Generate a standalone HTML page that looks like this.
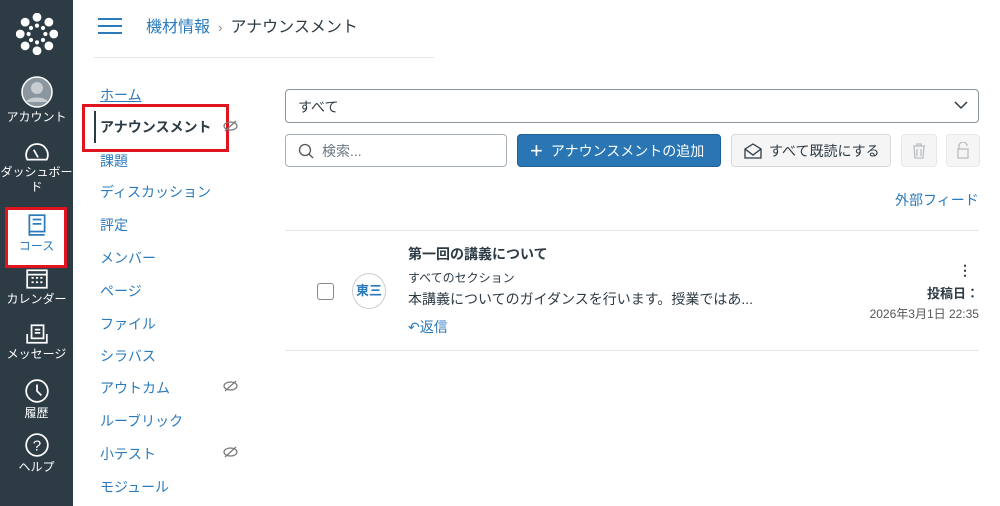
<!DOCTYPE html>
<html><head><meta charset="utf-8"><style>
*{box-sizing:border-box;margin:0;padding:0}
body{width:1000px;height:506px;overflow:hidden;background:#fff;font-family:"Liberation Sans","Noto Sans CJK JP",sans-serif;color:#2d3b45;position:relative}
.gn{position:absolute;left:0;top:0;width:73px;height:506px;background:#2d3b45}
.gi{position:absolute;left:0;width:73px;text-align:center;color:#fff;font-size:12px;line-height:15px}
.gi svg{display:block;margin:0 auto 2px}
.a{position:absolute;font-size:14px;color:#2b7abc;left:100px}
.abs{position:absolute}
.btn{position:absolute;border-radius:4px;font-size:14px;display:flex;align-items:center}
</style></head><body>
<div class="gn"></div>
<svg class="abs" style="left:16px;top:13px" width="42" height="42" viewBox="0 0 40 40" fill="#fff">
<circle cx="20" cy="4" r="4.2"/><circle cx="20" cy="36" r="4.2"/><circle cx="4" cy="20" r="4.2"/><circle cx="36" cy="20" r="4.2"/>
<circle cx="8.7" cy="8.7" r="4.2"/><circle cx="31.3" cy="8.7" r="4.2"/><circle cx="8.7" cy="31.3" r="4.2"/><circle cx="31.3" cy="31.3" r="4.2"/>
<circle cx="20" cy="12" r="2"/><circle cx="20" cy="28" r="2"/><circle cx="12" cy="20" r="2"/><circle cx="28" cy="20" r="2"/>
<circle cx="14.3" cy="14.3" r="2"/><circle cx="25.7" cy="14.3" r="2"/><circle cx="14.3" cy="25.7" r="2"/><circle cx="25.7" cy="25.7" r="2"/></svg>
<div class="gi" style="top:76px"><svg width="32" height="32" viewBox="0 0 32 32"><circle cx="16" cy="16" r="15" fill="#8b969e" stroke="#fff" stroke-width="1.5"/><circle cx="16" cy="12" r="6" fill="#c7cdd1"/><path d="M5 26c3-6 19-6 22 0" fill="#c7cdd1"/></svg>アカウント</div>
<div class="gi" style="top:141px"><svg width="26" height="22" viewBox="0 0 24 20" fill="none" stroke="#fff" stroke-width="1.6"><path d="M3 17A10 10 0 1 1 21 17Z"/><path d="M9 8l4 7"/></svg>ダッシュボー<br>ド</div>
<div class="abs" style="left:5px;top:207px;width:62px;height:61px;background:#fff;border:3px solid #e0141e"></div>
<div class="gi" style="top:213px;color:#2b7abc"><svg width="22" height="24" viewBox="0 0 20 22" fill="none" stroke="#2b7abc" stroke-width="1.6"><rect x="3" y="2" width="14" height="15"/><path d="M3 17v3h14M6 6h8M6 10h8"/></svg>コース</div>
<div class="gi" style="top:268px"><svg width="24" height="22" viewBox="0 0 22 20" fill="none" stroke="#fff" stroke-width="1.6"><rect x="2" y="2" width="18" height="16"/><path d="M2 6h18M6 9h2M10 9h2M14 9h2M6 13h2M10 13h2M14 13h2"/></svg>カレンダー</div>
<div class="gi" style="top:323px"><svg width="24" height="22" viewBox="0 0 22 20" fill="none" stroke="#fff" stroke-width="1.6"><rect x="6" y="2" width="11" height="12"/><path d="M2 10v8h18v-8M9 6h5M9 9h5"/></svg>メッセージ</div>
<div class="gi" style="top:378px"><svg width="26" height="26" viewBox="0 0 24 24" fill="none" stroke="#fff" stroke-width="1.6"><circle cx="12" cy="12" r="10"/><path d="M12 6v6l4 4"/></svg>履歴</div>
<div class="gi" style="top:432px"><svg width="26" height="26" viewBox="0 0 24 24" fill="none" stroke="#fff" stroke-width="1.6"><circle cx="12" cy="12" r="10"/><text x="12" y="17" font-size="14" fill="#fff" stroke="none" text-anchor="middle" font-family="Liberation Sans">?</text></svg>ヘルプ</div>

<svg class="abs" style="left:98px;top:17px" width="24" height="18"><path d="M0 2h24M0 9h24M0 16h24" stroke="#2b7abc" stroke-width="2"/></svg>
<div class="abs" style="left:146px;top:13px;font-size:16px;color:#2b7abc">機材情報 <span style="color:#888;font-size:13px">&nbsp;›&nbsp;</span> <span style="color:#2d3b45">アナウンスメント</span></div>
<div class="abs" style="left:94px;top:57px;width:340px;height:1px;background:#e4e6e8"></div>

<div class="a" style="top:85px;text-decoration:underline">ホーム</div>
<div class="abs" style="left:82px;top:104px;width:147px;height:48px;border:3px solid #e0141e"></div>
<div class="abs" style="left:94px;top:111px;width:2px;height:32px;background:#2d3b45"></div>
<div class="a" style="top:117px;color:#2d3b45;font-weight:bold">アナウンスメント</div>
<div class="a" style="top:151px">課題</div>
<div class="a" style="top:182px">ディスカッション</div>
<div class="a" style="top:215px">評定</div>
<div class="a" style="top:248px">メンバー</div>
<div class="a" style="top:281px">ページ</div>
<div class="a" style="top:314px">ファイル</div>
<div class="a" style="top:346px">シラバス</div>
<div class="a" style="top:378px">アウトカム</div>
<div class="a" style="top:411px">ルーブリック</div>
<div class="a" style="top:444px">小テスト</div>
<div class="a" style="top:477px">モジュール</div>
<svg class="abs" style="left:223px;top:120px" width="15" height="12" viewBox="0 0 15 12" fill="none" stroke="#777" stroke-width="1.2"><ellipse cx="7.5" cy="6" rx="6.5" ry="4"/><path d="M2 11L13 1"/></svg>
<svg class="abs" style="left:223px;top:380px" width="15" height="12" viewBox="0 0 15 12" fill="none" stroke="#777" stroke-width="1.2"><ellipse cx="7.5" cy="6" rx="6.5" ry="4"/><path d="M2 11L13 1"/></svg>
<svg class="abs" style="left:223px;top:446px" width="15" height="12" viewBox="0 0 15 12" fill="none" stroke="#777" stroke-width="1.2"><ellipse cx="7.5" cy="6" rx="6.5" ry="4"/><path d="M2 11L13 1"/></svg>

<div class="abs" style="left:285px;top:89px;width:694px;height:34px;border:1px solid #8a959c;border-radius:4px;font-size:14px;padding:7px 12px">すべて</div>
<svg class="abs" style="left:954px;top:101px" width="14" height="9"><path d="M1 1l6 6 6-6" fill="none" stroke="#2d3b45" stroke-width="1.5"/></svg>
<div class="btn" style="left:285px;top:134px;width:222px;height:33px;border:1px solid #a5afb5;color:#6b7780;padding-left:12px"><svg width="16" height="16" style="margin-right:8px"><circle cx="7" cy="7" r="5.5" fill="none" stroke="#555" stroke-width="1.3"/><path d="M11 11l4 4" stroke="#555" stroke-width="1.3"/></svg>検索...</div>
<div class="btn" style="left:517px;top:134px;width:204px;height:33px;background:#2a75b3;color:#fff;padding-left:12px;border:1px solid #1e5f96"><span style="font-size:22px;font-weight:300;margin-right:8px;line-height:1">+</span>アナウンスメントの追加</div>
<div class="btn" style="left:731px;top:134px;width:160px;height:33px;background:#f5f5f5;border:1px solid #d7dadd;padding-left:12px"><svg width="18" height="16" style="margin-right:7px" fill="none" stroke="#2d3b45" stroke-width="1.3"><path d="M1 6l8-5 8 5v9H1z"/><path d="M1 6l8 6 8-6"/></svg>すべて既読にする</div>
<div class="btn" style="left:901px;top:134px;width:36px;height:33px;background:#f5f5f5;border:1px solid #e6e8ea;justify-content:center"><svg width="14" height="16" fill="none" stroke="#b8bec2" stroke-width="1.3"><path d="M1 3h12M5 3V1h4v2M2 3l1 12h8l1-12M5 6v7M9 6v7"/></svg></div>
<div class="btn" style="left:946px;top:134px;width:34px;height:33px;background:#f5f5f5;border:1px solid #e6e8ea;justify-content:center"><svg width="12" height="17" fill="none" stroke="#b8bec2" stroke-width="1.3"><path d="M2 7V4a4 4 0 0 1 8 0"/><rect x="1" y="7" width="10" height="9"/></svg></div>

<div class="abs" style="left:895px;top:190px;font-size:14px;color:#2b7abc">外部フィード</div>
<div class="abs" style="left:285px;top:230px;width:694px;height:1px;background:#e4e6e8"></div>
<div class="abs" style="left:285px;top:350px;width:694px;height:1px;background:#e4e6e8"></div>
<div class="abs" style="left:317px;top:283px;width:17px;height:17px;border:1px solid #888;border-radius:3px"></div>
<div class="abs" style="left:352px;top:273px;width:34px;height:36px;border:1px solid #c7cdd1;border-radius:50%;font-size:13px;font-weight:bold;color:#2b7abc;text-align:center;line-height:34px">東三</div>
<div class="abs" style="left:408px;top:244px;font-size:14px;font-weight:bold">第一回の講義について</div>
<div class="abs" style="left:408px;top:269px;font-size:12px">すべてのセクション</div>
<div class="abs" style="left:408px;top:289px;font-size:14px">本講義についてのガイダンスを行います。授業ではあ...</div>
<div class="abs" style="left:408px;top:317px;font-size:14px;color:#2b7abc">↶返信</div>
<div class="abs" style="left:958px;top:262px;font-size:14px;font-weight:bold">⋮</div>
<div class="abs" style="right:21px;top:283px;font-size:13px;font-weight:bold">投稿日：</div>
<div class="abs" style="right:21px;top:305px;font-size:12px;color:#555">2026年3月1日 22:35</div>
</body></html>
